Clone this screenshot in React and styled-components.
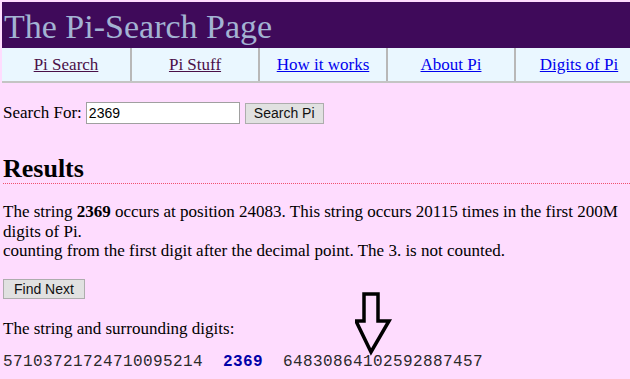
import React from "react";
import styled, { createGlobalStyle } from "styled-components";

const Global = createGlobalStyle`
  html, body {
    margin: 0;
    padding: 0;
    overflow: hidden;
    background: #fedcfe;
  }
  body {
    padding: 2px 0 0 2px;
    font-family: "Liberation Serif", "Times New Roman", serif;
    font-size: 17px;
    color: #000;
  }
`;

const Page = styled.div`
  position: relative;
  width: 640px;
`;

const Header = styled.h1`
  margin: 0;
  height: 46px;
  background: #3f0a5a;
  color: #a3b3d3;
  font-weight: normal;
  font-size: 34px;
  line-height: 50px;
  padding-left: 2px;
  overflow: hidden;
`;

const Nav = styled.div`
  display: grid;
  grid-template-columns: repeat(5, 128px);
  background: #eaf7ff;
  border-bottom: 2px solid #c4c4c4;
`;

const NavCell = styled.div`
  height: 33px;
  display: flex;
  align-items: center;
  justify-content: center;
  border-left: ${(p) => (p.$first ? "none" : "2px solid #b8b8b8")};
`;

const NavLink = styled.a`
  color: ${(p) => (p.$visited ? "#4a1048" : "#0000ee")};
  text-decoration: underline;
  font-size: 17px;
  cursor: pointer;
`;

const SearchRow = styled.form`
  display: flex;
  align-items: center;
  margin: 19px 0 0 1px;
`;

const Label = styled.span`
  margin-right: 4px;
`;

const Input = styled.input`
  width: 148px;
  height: 16px;
  padding: 2px 2px;
  border: 1px solid #a0a0a0;
  border-radius: 0;
  font-family: "Liberation Sans", Arial, sans-serif;
  font-size: 14px;
  margin-right: 5px;
  background: #fff;
`;

const Button = styled.button`
  font-family: "Liberation Sans", Arial, sans-serif;
  font-size: 14px;
  color: #111;
  background: #e1e1e1;
  border: 1px solid #adadad;
  border-radius: 0;
  padding: 0 ${(p) => p.$px || "10px"};
  height: ${(p) => p.$h || "21px"};
`;

const Results = styled.h2`
  margin: 30px 0 0 1px;
  padding-bottom: 0;
  font-size: 26px;
  line-height: 29px;
  font-weight: bold;
  border-bottom: 1px dotted #f0506e;
`;

const Para = styled.p`
  margin: ${(p) => p.$m || "18px 0 0 1px"};
  line-height: 19.5px;
`;

const Digits = styled.div`
  margin: 15px 0 0 1px;
  font-family: "Liberation Mono", "Courier New", monospace;
  font-size: 16px;
  letter-spacing: 0.4px;
  color: #2a2a2a;
  white-space: pre;
`;

const Hit = styled.b`
  color: #0000a8;
`;

const Arrow = styled.svg`
  position: absolute;
  left: 353px;
  top: 289px;
`;

const links = [
  { label: "Pi Search", visited: true },
  { label: "Pi Stuff", visited: true },
  { label: "How it works" },
  { label: "About Pi" },
  { label: "Digits of Pi" },
];

export default function App() {
  return (
    <Page>
      <Global />
      <Header>The Pi-Search Page</Header>
      <Nav>
        {links.map((l, i) => (
          <NavCell key={l.label} $first={i === 0}>
            <NavLink $visited={l.visited}>{l.label}</NavLink>
          </NavCell>
        ))}
      </Nav>
      <SearchRow onSubmit={(e) => e.preventDefault()}>
        <Label>Search For:</Label>
        <Input defaultValue="2369" />
        <Button type="button" $px="8px">Search Pi</Button>
      </SearchRow>
      <Results>Results</Results>
      <Para>
        The string <b>2369</b> occurs at position 24083. This string occurs 20115 times in the first 200M digits of Pi.
        <br />
        counting from the first digit after the decimal point. The 3. is not counted.
      </Para>
      <Para $m="18px 0 0 1px">
        <Button type="button" $h="20px">Find Next</Button>
      </Para>
      <Para $m="20px 0 0 1px">The string and surrounding digits:</Para>
      <Digits>
        {"57103721724710095214  "}
        <Hit>2369</Hit>
        {"  64830864102592887457"}
      </Digits>
      <Arrow width="40" height="66" viewBox="0 0 40 66">
        <path
          d="M9 3 H23 V30 H34 L16 61 L1 30 H9 Z"
          fill="none"
          stroke="#000"
          strokeWidth="3.5"
          strokeLinejoin="miter"
        />
      </Arrow>
    </Page>
  );
}
